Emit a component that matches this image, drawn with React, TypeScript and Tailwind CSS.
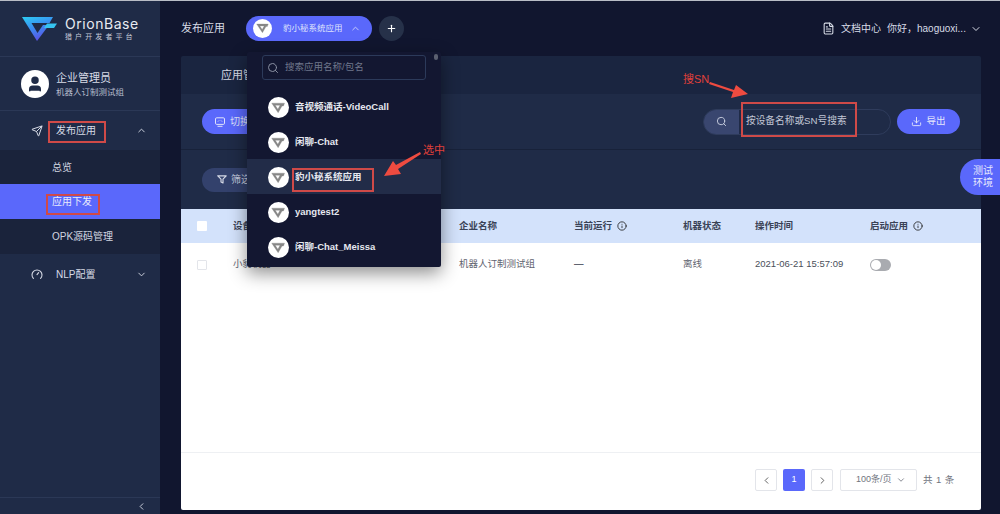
import React from "react";
import { ChevronDown, ChevronUp, ChevronLeft, ChevronRight, Search, Plus, Send, Download, Info, FileText, User } from "lucide-react";

const font = { fontFamily: '"Liberation Sans", "Noto Sans CJK SC", sans-serif' };

function AppIcon({ size = 22 }: { size?: number }) {
  return (
    <span className="flex shrink-0 items-center justify-center rounded-full bg-white" style={{ width: size, height: size }}>
      <svg width={size * 0.68} height={size * 0.55} viewBox="0 0 20 16">
        <path d="M1 1.5 H19 L17.5 5.5 H15.5 L10 15 Z M6 4.6 L9.6 10 L12.6 4.6 Z" fill="#878787" fillRule="evenodd" stroke="#878787" strokeWidth="0.4" strokeLinejoin="round" />
      </svg>
    </span>
  );
}

function Logo() {
  return (
    <svg width="35" height="26" viewBox="0 0 35 26" className="shrink-0">
      <defs>
        <linearGradient id="lg" x1="0" y1="0" x2="0.45" y2="1">
          <stop offset="0" stopColor="#2ccdf2" />
          <stop offset="0.5" stopColor="#3a8ff2" />
          <stop offset="1" stopColor="#5b52e6" />
        </linearGradient>
      </defs>
      <path d="M0 1 H31 L27.5 7 H9.5 L15.5 17 L21 9 H27 L15 25 Z" fill="url(#lg)" />
      <path d="M25 7.5 H35 L32 12 H22 Z" fill="#36c4f0" />
    </svg>
  );
}

function RedBox({ className }: { className: string }) {
  return <div className={"absolute border-2 border-[#cf4a48] " + className} />;
}

const apps = ["音视频通话-VideoCall", "闲聊-Chat", "豹小秘系统应用", "yangtest2", "闲聊-Chat_Meissa"];

function Sidebar() {
  return (
    <aside className="flex h-full w-[160px] shrink-0 flex-col bg-[#1f2b47] text-[#d7dbe6]">
      <div className="flex h-[56px] shrink-0 items-center gap-[8px] border-b border-[#2b3856] pl-[22px]">
        <Logo />
        <div className="flex flex-col">
          <span className="text-[14px] leading-[16px] tracking-[0.55px] text-[#e8ebf2]" style={{ fontFamily: "Inter, sans-serif" }}>OrionBase</span>
          <span className="text-[7px] leading-[10px] tracking-[3.1px] text-[#c5cad8]">猎户开发者平台</span>
        </div>
      </div>
      <div className="flex h-[54px] shrink-0 items-center gap-[7px] border-b border-[#2b3856] pl-[21px]">
        <span className="flex h-[28px] w-[28px] items-center justify-center rounded-full bg-white">
          <User size={18} fill="#1f2b47" stroke="#1f2b47" />
        </span>
        <div className="flex flex-col">
          <span className="text-[11px] leading-[16px]">企业管理员</span>
          <span className="text-[8.5px] leading-[12px] text-[#b8bece]">机器人订制测试组</span>
        </div>
      </div>
      <div className="flex h-[39px] shrink-0 items-center pl-[31px] pr-[13px] text-[10px]">
        <Send size={12} className="mr-[13px]" />
        <span className="flex-1">发布应用</span>
        <ChevronUp size={11} />
      </div>
      <div className="flex shrink-0 flex-col bg-[#1a233b] text-[10px] text-[#d2d6e1]">
        <div className="flex h-[34px] items-center pl-[52px]">总览</div>
        <div className="flex h-[35px] items-center bg-[#5a68fb] pl-[52px] text-[#e9ebfb]">应用下发</div>
        <div className="flex h-[35px] items-center pl-[52px]">OPK源码管理</div>
      </div>
      <div className="flex h-[40px] shrink-0 items-center pl-[31px] pr-[13px] text-[10px]">
        <svg width="12" height="12" viewBox="0 0 12 12" fill="none" stroke="currentColor" strokeWidth="1.1" strokeLinecap="round" className="mr-[13px]">
          <path d="M2.4 10.4 A5 5 0 1 1 9.6 10.4" />
          <path d="M6 6.6 L7.6 4.6" />
        </svg>
        <span className="flex-1">NLP配置</span>
        <ChevronDown size={11} />
      </div>
      <div className="flex-1" />
      <div className="flex h-[17px] shrink-0 items-center justify-end border-t border-[#2b3856] pr-[13px]">
        <ChevronLeft size={11} />
      </div>
    </aside>
  );
}

function Header() {
  return (
    <header className="flex h-[55px] shrink-0 items-center pl-[21px] pr-[18px] text-[#d7dbe6]">
      <span className="w-[65px] text-[11px]">发布应用</span>
      <div className="flex h-[25px] w-[126px] items-center rounded-full bg-[#5a68fb] pl-[7px] pr-[11px]">
        <AppIcon size={19} />
        <span className="ml-[6px] flex-1 pl-[5px] text-[8.5px] text-[#dfe2fb]">豹小秘系统应用</span>
        <ChevronUp size={11} className="text-[#cfd3fb]" />
      </div>
      <span className="ml-[7px] flex h-[25px] w-[25px] items-center justify-center rounded-full bg-[#263149]">
        <Plus size={11} className="text-white" strokeWidth={2.5} />
      </span>
      <div className="flex-1" />
      <FileText size={13} className="mr-[6px]" />
      <span className="text-[10px]">文档中心</span>
      <span className="ml-[6px] w-[83px] text-[10px]">你好，haoguoxi...</span>
      <ChevronDown size={12} />
    </header>
  );
}

function Toolbar() {
  return (
    <>
      <div className="flex h-[38px] items-center bg-[#1a2540] pl-[40px] text-[11px] text-[#d7dbe6]">应用管理</div>
      <div className="flex h-[56px] items-center border-b border-[#18223a] bg-[#1f2b47] pl-[21px] pr-[21px]">
        <div className="flex h-[25px] w-[90px] items-center rounded-full bg-[#5a68fb] pl-[13px] text-[10px] text-[#dfe2fb]">
          <svg width="10" height="10" viewBox="0 0 10 10" fill="none" stroke="#dfe2fb" strokeWidth="1" className="mr-[5px]">
            <rect x="0.5" y="0.8" width="9" height="6.6" rx="1.2" />
            <path d="M2.5 9.3 H7.5 M3 4.5 L4 3.5 M7 4.5 L6 3.5" />
          </svg>
          切换
        </div>
        <div className="flex-1" />
        <div className="flex h-[26px] w-[188px] items-center overflow-hidden rounded-full border border-[#2f3c5c]">
          <span className="flex h-full w-[35px] items-center justify-center bg-[#39466f]">
            <Search size={11} className="text-[#cdd2e2]" />
          </span>
          <span className="pl-[7px] text-[9.7px] text-[#c2c7d6]">按设备名称或SN号搜索</span>
        </div>
        <div className="ml-[6px] flex h-[25px] w-[63px] items-center justify-center gap-[4px] rounded-full bg-[#5a68fb] text-[9.5px] text-[#e6e8fc]">
          <Download size={11} />导出
        </div>
      </div>
      <div className="flex h-[59px] items-center bg-[#1f2b47] pl-[21px]">
        <div className="flex h-[24px] w-[90px] items-center rounded-full bg-[#33416c] pl-[15px] text-[10px] text-[#c6cbdc]">
          <svg width="10" height="9" viewBox="0 0 10 9" fill="none" stroke="#d5d9e6" strokeWidth="1.2" strokeLinejoin="round" className="mr-[4px]">
            <path d="M0.8 0.8 H9.2 L6 4.2 V8 L4 7 V4.2 Z" />
          </svg>
          筛选
        </div>
      </div>
    </>
  );
}

const head = [
  ["w-[112px]", "设备名称", false],
  ["w-[114px]", "设备SN", false],
  ["w-[115px]", "企业名称", false],
  ["w-[109px]", "当前运行", true],
  ["w-[72px]", "机器状态", false],
  ["w-[115px]", "操作时间", false],
  ["w-[100px]", "启动应用", true],
] as const;

function Table() {
  return (
    <div className="flex flex-1 flex-col bg-white">
      <div className="flex h-[34px] shrink-0 items-center bg-[#d3e2fb] pl-[16px] text-[9.5px] font-bold text-[#3a4256]">
        <span className="mr-[26px] h-[10px] w-[10px] rounded-[1px] bg-white" />
        {head.map(([w, t, info]) => (
          <span key={t} className={"flex items-center " + w}>
            {t}
            {info && <Info size={10} strokeWidth={2} className="ml-[5px] text-[#222]" />}
          </span>
        ))}
      </div>
      <div className="flex h-[43px] shrink-0 items-center pl-[16px] text-[9.5px] text-[#5f6470]">
        <span className="mr-[26px] h-[10px] w-[10px] rounded-[1px] border border-[#e3e5ea]" />
        <span className="w-[112px]">小豹机器</span>
        <span className="w-[114px]">M2030000000000</span>
        <span className="w-[115px]">机器人订制测试组</span>
        <span className="w-[109px] font-bold">—</span>
        <span className="w-[72px]">离线</span>
        <span className="w-[115px] text-[#4a4f5a]">2021-06-21 15:57:09</span>
        <span className="flex h-[12px] w-[21px] items-center rounded-full bg-[#a9abb0] pl-[1px]">
          <span className="h-[10px] w-[10px] rounded-full bg-white" />
        </span>
      </div>
      <div className="flex-1" />
      <div className="flex h-[58px] shrink-0 items-start border-t border-[#eef0f3] pl-[574px] pt-[16px] text-[9px] text-[#70747e]">
        <span className="flex h-[22px] w-[22px] items-center justify-center rounded-[2px] border border-[#e3e5ea]"><ChevronLeft size={11} className="text-[#555]" /></span>
        <span className="ml-[6px] flex h-[22px] w-[22px] items-center justify-center rounded-[2px] bg-[#5a68fb] text-white">1</span>
        <span className="ml-[6px] flex h-[22px] w-[22px] items-center justify-center rounded-[2px] border border-[#e3e5ea]"><ChevronRight size={11} className="text-[#555]" /></span>
        <span className="ml-[7px] flex h-[22px] w-[77px] items-center justify-between rounded-[2px] border border-[#e3e5ea] pl-[15px] pr-[10px]">100条/页<ChevronDown size={10} /></span>
        <span className="ml-[6px] flex h-[22px] items-center text-[9.5px] tracking-[0.4px]">共 1 条</span>
      </div>
    </div>
  );
}

function Dropdown() {
  return (
    <div className="absolute left-[247px] top-[51px] flex h-[215px] w-[194px] flex-col rounded-[2px] bg-[#131731] shadow-[0_6px_18px_rgba(0,0,0,0.45)]">
      <div className="mx-[15px] mt-[3px] flex h-[25px] shrink-0 items-center rounded-[3px] border border-[#2c3a5a] pl-[4px] text-[9.5px] text-[#70778c]">
        <Search size={12} className="mr-[6px] text-[#8a90a2]" />搜索应用名称/包名
      </div>
      <span className="absolute right-[3px] top-[2px] h-[6px] w-[4px] rounded-full bg-[#5b6070]" />
      <div className="mt-[9px] flex flex-col text-[9.5px] font-bold text-[#e6e8ef]">
        {apps.map((a, i) => (
          <div key={a} className={"flex h-[35px] items-center pl-[21px] pt-[2px] " + (i === 2 ? "bg-[#222c48]" : "")}>
            <AppIcon size={21} />
            <span className="ml-[6px]">{a}</span>
          </div>
        ))}
      </div>
    </div>
  );
}

export default function App() {
  return (
    <div className="relative flex h-[514px] w-[1000px] overflow-hidden border-t border-[#b9bdc6] bg-[#11162f]" style={font}>
      <Sidebar />
      <main className="flex min-w-0 flex-1 flex-col">
        <Header />
        <div className="mb-[4px] ml-[21px] mr-[19px] flex flex-1 flex-col overflow-hidden rounded-[2px]">
          <Toolbar />
          <Table />
        </div>
      </main>
      <Dropdown />
      <div className="absolute left-[960px] top-[158px] flex h-[36px] w-[40px] items-center justify-center rounded-l-[18px] bg-[#5a68fb] pl-[6px] text-center text-[10px] leading-[12px] text-[#e6e8fc]">测试<br />环境</div>
      <RedBox className="left-[48px] top-[120px] h-[22px] w-[58px]" />
      <RedBox className="left-[46px] top-[193px] h-[21px] w-[54px]" />
      <RedBox className="left-[292px] top-[167px] h-[24px] w-[82px]" />
      <RedBox className="left-[741px] top-[101px] h-[35px] w-[116px]" />
      <span className="absolute left-[683px] top-[70px] text-[11px] text-[#e0403a]">搜SN</span>
      <span className="absolute left-[423px] top-[141px] text-[11px] text-[#e0403a]">选中</span>
      <svg className="absolute left-0 top-0" width="1000" height="514">
        <path d="M710 81 L734 89 L736 84 L748 93 L731 97 L733 91 L709 83 Z" fill="#ee4b40" />
        <path d="M420 151 L396 164 L393 160 L384 175 L401 173 L398 168 L421 153 Z" fill="#ee4b40" />
      </svg>
    </div>
  );
}
